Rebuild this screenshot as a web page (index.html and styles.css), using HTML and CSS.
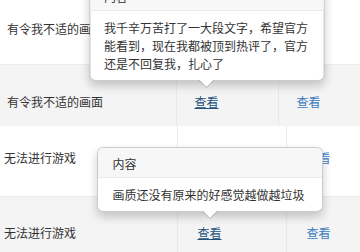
FILE: index.html
```html
<!DOCTYPE html>
<html lang="zh-CN">
<head>
    <meta charset="UTF-8">
    <meta name="viewport" content="width=device-width, initial-scale=1.0">
    <title>举报记录</title>
    <link rel="stylesheet" href="styles.css">
</head>
<body>
    <table class="report-table table-top">
        <colgroup>
            <col class="w-reason">
            <col class="w-detail">
            <col>
        </colgroup>
        <tr class="row-first">
            <td class="col-reason">有令我不适的画面</td>
            <td class="col-action"><a href="#" class="link">查看</a></td>
            <td class="col-action"><a href="#" class="link">查看</a></td>
        </tr>
        <tr class="row-striped row-second">
            <td class="col-reason">有令我不适的画面</td>
            <td class="col-action">
                <span class="pop-anchor">
                    <a href="#" class="link is-open">查看</a>
                    <div class="popover pop-long">
                        <div class="popover-title">内容</div>
                        <div class="popover-content">我千辛万苦打了一大段文字，希望官方能看到，现在我都被顶到热评了，官方还是不回复我，扎心了</div>
                        <span class="popover-arrow"></span>
                    </div>
                </span>
            </td>
            <td class="col-action"><a href="#" class="link">查看</a></td>
        </tr>
    </table>

    <table class="report-table table-bottom">
        <colgroup>
            <col class="w-reason">
            <col class="w-detail">
            <col>
        </colgroup>
        <tr class="row-third">
            <td class="col-reason">无法进行游戏</td>
            <td class="col-action"><a href="#" class="link">查看</a></td>
            <td class="col-action"><a href="#" class="link">查看</a></td>
        </tr>
        <tr class="row-striped row-fourth">
            <td class="col-reason">无法进行游戏</td>
            <td class="col-action">
                <span class="pop-anchor">
                    <a href="#" class="link is-open">查看</a>
                    <div class="popover pop-short">
                        <div class="popover-title">内容</div>
                        <div class="popover-content">画质还没有原来的好感觉越做越垃圾</div>
                        <span class="popover-arrow"></span>
                    </div>
                </span>
            </td>
            <td class="col-action"><a href="#" class="link">查看</a></td>
        </tr>
    </table>
</body>
</html>
```

FILE: styles.css
```css
body {
    margin: 0;
    font-family: "Noto Sans CJK SC", "Noto Sans", sans-serif;
    font-size: 12px;
    color: #333;
    background: #fff;
    overflow: hidden;
}

/* tables */
.report-table {
    width: 100%;
    border-collapse: collapse;
    table-layout: fixed;
}
.report-table td {
    padding: 0;
    vertical-align: top;
    line-height: 18px;
    white-space: nowrap;
}
.table-top .w-reason { width: 176px; }
.table-top .w-detail { width: 102px; }
.table-bottom .w-reason { width: 177px; }
.table-bottom .w-detail { width: 109px; }

.row-first { height: 64px; }
.row-first td { padding-top: 20px; }
.row-second { height: 62px; }
.row-second td { padding-top: 28px; }
.row-third { height: 70px; }
.row-third td { padding-top: 23px; }
.row-fourth { height: 56px; }
.row-fourth td { padding-top: 27px; }

.row-striped td {
    background: #f4f4f4;
    border-top: 1px solid #ececec;
}
.col-action {
    border-left: 1px solid #e9e9e9;
}
.table-top .col-reason { padding-left: 7px; }
.table-top .col-action { padding-left: 18px; }
.table-bottom .col-reason { padding-left: 4px; }
.table-bottom .col-action { padding-left: 20px; }

.link {
    color: #3b7bbf;
    text-decoration: none;
}
.link.is-open {
    color: #23527c;
    text-decoration: underline;
}

/* popover */
.pop-anchor {
    position: relative;
    display: inline-block;
}
.popover {
    position: absolute;
    bottom: calc(100% + 12px);
    left: 50%;
    transform: translateX(-50%);
    z-index: 5;
    box-sizing: border-box;
    background: #fff;
    border: 1px solid rgba(0, 0, 0, 0.2);
    border-radius: 6px;
    box-shadow: 0 5px 10px rgba(0, 0, 0, 0.2);
    white-space: normal;
    text-align: left;
}
.pop-long { width: 235px; }
.pop-short {
    width: 226px;
    white-space: nowrap;
}
.popover-title {
    padding: 7px 15px 5px 14px;
    line-height: 17px;
    background: #f7f7f7;
    border-bottom: 1px solid #ebebeb;
    border-radius: 5px 5px 0 0;
}
.popover-content {
    padding: 8px 14px 7px;
    line-height: 18px;
}
.pop-short .popover-title,
.pop-short .popover-content {
    padding-left: 15px;
}
.popover-arrow,
.popover-arrow::after {
    position: absolute;
    width: 0;
    height: 0;
    border-style: solid;
    border-color: transparent;
}
.popover-arrow {
    left: 50%;
    bottom: -8px;
    margin-left: -8px;
    border-width: 8px 8px 0;
    border-top-color: rgba(0, 0, 0, 0.2);
}
.popover-arrow::after {
    content: "";
    left: -7px;
    bottom: 1px;
    border-width: 7px 7px 0;
    border-top-color: #fff;
}
```
